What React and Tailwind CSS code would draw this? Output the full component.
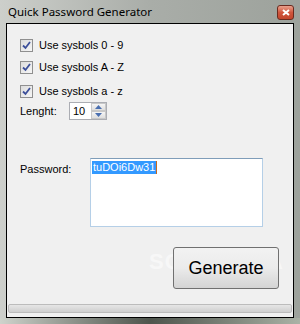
import { useState } from "react";

function Check() {
  return (
    <div className="w-[13px] h-[13px] border border-[#8f8f8f] bg-gradient-to-br from-[#dcdcdc] to-[#f6f6f6] flex items-center justify-center">
      <svg width="9" height="9" viewBox="0 0 9 9">
        <path d="M1 4.5 L3.5 7 L8 1" fill="none" stroke="#3c4f9a" strokeWidth="1.8" />
      </svg>
    </div>
  );
}

function Option({ label, className }) {
  return (
    <div className={"flex items-center h-[13px] gap-[6px] " + className}>
      <Check />
      <span>{label}</span>
    </div>
  );
}

export default function App() {
  const [password, setPassword] = useState("tuDOi6Dw31");
  const [length] = useState(10);

  const generate = () => {
    const chars = "0123456789ABCDEFGHIJKLMNOPQRSTUVWXYZabcdefghijklmnopqrstuvwxyz";
    let out = "";
    for (let i = 0; i < length; i++) out += chars[Math.floor(Math.random() * chars.length)];
    setPassword(out);
  };

  return (
    <div className="w-[300px] h-[324px] overflow-hidden flex flex-col bg-gradient-to-r from-[#cdcfcb] via-[#a9ada8] to-[#9da29c] font-['Liberation_Sans',Arial,sans-serif]">
      {/* title bar */}
      <div className="h-[23px] flex items-center justify-between pl-[8px] pr-[6px]">
        <span className="text-[11.5px] text-black font-['Noto_Sans',sans-serif] leading-none mt-[1px]">Quick Password Generator</span>
        <div className="w-[17px] h-[15px] mt-[1px] rounded-[3px] border border-[#6b2b20] bg-gradient-to-b from-[#e8a08c] via-[#d0553d] to-[#c2452c] flex items-center justify-center">
          <svg width="8" height="7" viewBox="0 0 8 7">
            <path d="M1 1 L7 6 M7 1 L1 6" stroke="#fff" strokeWidth="2" />
          </svg>
        </div>
      </div>

      {/* client area */}
      <div className="mx-[6px] h-[295px] border border-black bg-[#f0f0f0] relative flex flex-col text-[11px] leading-[13px] text-black">
        <Option label="Use sysbols 0 - 9" className="ml-[13px] mt-[15px]" />
        <Option label="Use sysbols A - Z" className="ml-[13px] mt-[9px]" />
        <Option label="Use sysbols a - z" className="ml-[13px] mt-[11px]" />

        <div className="flex items-center ml-[13px] mt-[4px]">
          <span className="w-[49px]">Lenght:</span>
          <div className="w-[38px] h-[18px] border border-[#abadb3] bg-white flex">
            <span className="flex-1 pl-[3px] leading-[16px]">{length}</span>
            <div className="w-[15px] flex flex-col">
              <div className="flex-1 border border-[#c8c8c8] bg-gradient-to-b from-[#f5f5f5] to-[#dedede] flex items-center justify-center">
                <svg width="7" height="4" viewBox="0 0 7 4"><path d="M0 4 L3.5 0 L7 4Z" fill="#4a6fb0" /></svg>
              </div>
              <div className="flex-1 border border-[#c8c8c8] bg-gradient-to-b from-[#f5f5f5] to-[#dedede] flex items-center justify-center">
                <svg width="7" height="4" viewBox="0 0 7 4"><path d="M0 0 L7 0 L3.5 4Z" fill="#4a6fb0" /></svg>
              </div>
            </div>
          </div>
        </div>

        <div className="flex items-start ml-[13px] mt-[38px]">
          <span className="w-[70px] mt-[5px]">Password:</span>
          <div className="w-[173px] h-[69px] border border-[#b5cfe7] border-t-[#7f9db9] bg-white pl-[1px] pt-[2px]">
            <span className="bg-[#3399ff] text-white px-[1px] leading-[13px] inline-block border-r border-[#c76a1e]">{password}</span>
          </div>
        </div>

        <div className="relative flex justify-end mr-[14px] mt-[20px]">
          <div className="absolute left-[142px] top-[8px] text-[22px] font-bold tracking-[1px] text-white opacity-50 pointer-events-none">SOFTPEDIA</div>
          <button
            onClick={generate}
            className="relative w-[106px] h-[42px] rounded-[3px] border border-[#707070] bg-gradient-to-b from-[#f2f2f2] via-[#ebebeb] to-[#d4d4d4] text-[18px] text-black"
          >
            Generate
          </button>
        </div>

        <div className="mx-[1px] mt-[15px] h-[9px] rounded-[2px] border border-[#bcbcbc] bg-gradient-to-b from-[#e6e6e6] to-[#cfcfcf]" />
      </div>

      <div className="flex-1 bg-gradient-to-r from-[#cfd3cc] via-[#4f554d] to-[#aab2a6]" />
    </div>
  );
}
